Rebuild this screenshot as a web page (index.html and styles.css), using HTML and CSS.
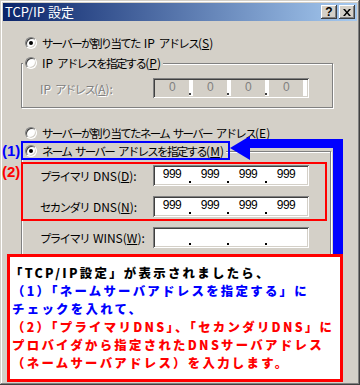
FILE: index.html
```html
<!DOCTYPE html>
<html lang="ja">
<head>
  <meta charset="UTF-8" />
  <title>TCP/IP 設定</title>
  <link rel="stylesheet" href="styles.css">
</head>
<body>
  <div class="window">
    <div class="titlebar">
      <span class="title">TCP/IP 設定</span>
      <div class="tbuttons">
        <span class="tbtn help">?</span>
        <span class="tbtn close">
          <svg width="8" height="7" viewBox="0 0 8 7"><path d="M0 0h2l2 2.5L6 0h2L5 3.5L8 7H6L4 4.5L2 7H0l3-3.5z" fill="#000"/></svg>
        </span>
      </div>
    </div>

    <div class="content">
      <div class="radio-row first"><span class="radio checked"></span><span>サーバーが割り当てた <span class="lat">IP</span> アドレス<span class="lat">(<u>S</u>)</span></span></div>

      <fieldset class="group group-ip">
        <legend><div class="radio-row"><span class="radio"></span><span><span class="lat">IP</span> アドレスを指定する<span class="lat">(<u>P</u>)</span></span></div></legend>
        <div class="field-row">
          <span class="label disabled"><span class="lat">IP</span> アドレス<span class="lat">(<u>A</u>):</span></span>
          <div class="ipbox off">
            <span class="oct">0</span><span class="sep"><i></i></span>
            <span class="oct">0</span><span class="sep"><i></i></span>
            <span class="oct">0</span><span class="sep"><i></i></span>
            <span class="oct">0</span><span class="sep"></span>
          </div>
        </div>
      </fieldset>

      <div class="radio-row third"><span class="radio"></span><span>サーバーが割り当てたネーム サーバー アドレス<span class="lat">(<u>E</u>)</span></span></div>

      <fieldset class="group group-dns">
        <legend><div class="radio-row"><span class="radio checked"></span><span>ネーム サーバー アドレスを指定する<span class="lat">(<u>M</u>)</span></span></div></legend>
        <div class="field-row dns">
          <span class="label">プライマリ <span class="lat">DNS(<u>D</u>):</span></span>
          <div class="ipbox">
            <span class="oct">999</span><span class="sep"><i></i></span>
            <span class="oct">999</span><span class="sep"><i></i></span>
            <span class="oct">999</span><span class="sep"><i></i></span>
            <span class="oct">999</span><span class="sep"></span>
          </div>
        </div>
        <div class="field-row dns">
          <span class="label">セカンダリ <span class="lat">DNS(<u>N</u>):</span></span>
          <div class="ipbox">
            <span class="oct">999</span><span class="sep"><i></i></span>
            <span class="oct">999</span><span class="sep"><i></i></span>
            <span class="oct">999</span><span class="sep"><i></i></span>
            <span class="oct">999</span><span class="sep"></span>
          </div>
        </div>
        <div class="field-row dns">
          <span class="label">プライマリ <span class="lat">WINS(<u>W</u>):</span></span>
          <div class="ipbox">
            <span class="oct"></span><span class="sep"><i></i></span>
            <span class="oct"></span><span class="sep"><i></i></span>
            <span class="oct"></span><span class="sep"><i></i></span>
            <span class="oct"></span><span class="sep"></span>
          </div>
        </div>
      </fieldset>
    </div>

    <!-- annotations drawn over the dialog -->
    <div class="mark mark1">(1)</div>
    <div class="mark mark2">(2)</div>
    <div class="hl hl1"></div>
    <div class="hl hl2"></div>
    <svg class="arrow" width="360" height="385" viewBox="0 0 360 385">
      <rect x="333" y="139" width="10" height="116" fill="#0000ff"/>
      <rect x="246" y="139" width="97" height="9" fill="#0000ff"/>
      <polygon points="230,148 250,136 250,160" fill="#0000ff"/>
    </svg>

    <div class="callout">
      <div class="line black first-line">「TCP/IP設定」が表示されましたら、</div>
      <div class="line blue">（1）「ネームサーバアドレスを指定する」に</div>
      <div class="line blue">チェックを入れて、</div>
      <div class="line red">（2）「プライマリDNS」、「セカンダリDNS」に</div>
      <div class="line red">プロバイダから指定されたDNSサーバアドレス</div>
      <div class="line red">（ネームサーバアドレス）を入力します。</div>
    </div>
  </div>
</body>
</html>
```

FILE: styles.css
```css
html, body {
  margin: 0;
  padding: 0;
}

body {
  background: #d4d0c8;
  font-family: "Noto Sans CJK JP", sans-serif;
  font-size: 12px;
  color: #000;
}

.window {
  position: relative;
  width: 360px;
  height: 385px;
  box-sizing: border-box;
  padding: 3px;
  background: #d4d0c8;
  box-shadow: inset -1px -1px #404040, inset 1px 1px #d4d0c8, inset -2px -2px #808080, inset 2px 2px #fff;
  overflow: hidden;
}

.titlebar {
  height: 18px;
  display: flex;
  align-items: center;
  justify-content: space-between;
  padding: 0 2px 0 2px;
  background: linear-gradient(to right, #0a246a, #a6caf0);
}

.title {
  color: #fff;
  font-size: 13px;
  line-height: 18px;
}

.tbuttons {
  display: flex;
  gap: 2px;
}

.tbtn {
  width: 16px;
  height: 14px;
  display: flex;
  align-items: center;
  justify-content: center;
  background: #d4d0c8;
  box-shadow: inset -1px -1px #404040, inset 1px 1px #fff, inset -2px -2px #808080, inset 2px 2px #d4d0c8;
  font-family: "Liberation Sans", sans-serif;
  font-weight: bold;
  font-size: 12px;
  line-height: 14px;
}

.content {
  padding-top: 14px;
  font-size: 11.5px;
  letter-spacing: -1.7px;
  word-spacing: 3px;
}

/* latin parts of the labels keep their own spacing */
.lat {
  letter-spacing: 0;
  word-spacing: 0;
  font-size: 12px;
}

.radio-row {
  display: flex;
  align-items: center;
  gap: 5px;
  height: 16px;
  line-height: 16px;
  white-space: nowrap;
}

.content > .radio-row {
  margin-left: 22px;
}

.radio-row.third {
  margin-top: 17px;
}

.radio {
  position: relative;
  flex: none;
  width: 10px;
  height: 10px;
  border-radius: 50%;
  background: #fff;
  border: 1px solid;
  border-color: #808080 #fff #fff #808080;
  box-shadow: inset 1px 1px #404040, inset -1px -1px #d4d0c8;
}

.radio.checked::after {
  content: "";
  position: absolute;
  left: 3px;
  top: 3px;
  width: 4px;
  height: 4px;
  border-radius: 50%;
  background: #000;
}

.group {
  margin: 4px 0 0 18px;
  padding: 0;
  min-width: 0;
  box-sizing: border-box;
  border: 1px solid #808080;
  box-shadow: inset 1px 1px #fff, 1px 1px #fff;
}

.group legend {
  margin-left: 1px;
  padding: 0 2px;
  background: #d4d0c8;
}

.group-ip {
  width: 312px;
}

.group-dns {
  width: 310px;
  margin-top: 2px;
  padding-bottom: 40px;
}

.field-row {
  display: flex;
  align-items: center;
  margin: 7px 0 9px 18px;
}

.field-row.dns {
  margin: 10px 0 0 18px;
}

.field-row.dns:first-of-type {
  margin-top: 6px;
}

.label {
  width: 113px;
  white-space: nowrap;
}

.disabled {
  color: #808080;
  text-shadow: 1px 1px #fff;
}

.ipbox {
  width: 156px;
  height: 21px;
  box-sizing: border-box;
  padding: 2px;
  display: flex;
  background: #fff;
  box-shadow: inset 1px 1px #808080, inset -1px -1px #fff, inset 2px 2px #404040, inset -2px -2px #d4d0c8;
  font-family: "Liberation Sans", sans-serif;
  font-size: 12px;
  letter-spacing: -0.5px;
  word-spacing: 0;
}

.ipbox.off {
  height: 20px;
}

.oct {
  width: 34px;
  text-align: center;
  line-height: 15px;
}

.off .oct {
  background: #d4d0c8;
  color: #808080;
}

.sep {
  width: 4px;
  position: relative;
}

.sep i {
  position: absolute;
  left: 0;
  bottom: 1px;
  width: 2px;
  height: 2px;
  background: #000;
}

.off .sep i {
  background: #404040;
}

.mark {
  position: absolute;
  left: 2px;
  font-family: "Liberation Sans", sans-serif;
  font-size: 15px;
  font-weight: bold;
  line-height: 18px;
}

.mark1 {
  top: 142px;
  color: #0000ff;
}

.mark2 {
  top: 163px;
  color: #ff0000;
}

.hl {
  position: absolute;
  box-sizing: border-box;
  border: 2px solid;
}

.hl1 {
  left: 21px;
  top: 141px;
  width: 209px;
  height: 19px;
  border-color: #0000ff;
}

.hl2 {
  left: 21px;
  top: 162px;
  width: 306px;
  height: 59px;
  border-color: #ff0000;
}

.arrow {
  position: absolute;
  left: 0;
  top: 0;
}

.callout {
  position: absolute;
  left: 7px;
  top: 254px;
  width: 336px;
  height: 128px;
  box-sizing: border-box;
  border: 3px solid #ff0000;
  background: #fff;
  padding: 7px 0 0 2px;
  font-size: 12.4px;
  font-weight: 900;
  line-height: 18px;
  letter-spacing: 2.3px;
  white-space: nowrap;
}

.first-line {
  margin-left: -2px;
}

.black { color: #000; }
.blue { color: #0000ff; }
.red { color: #ff0000; }
```
